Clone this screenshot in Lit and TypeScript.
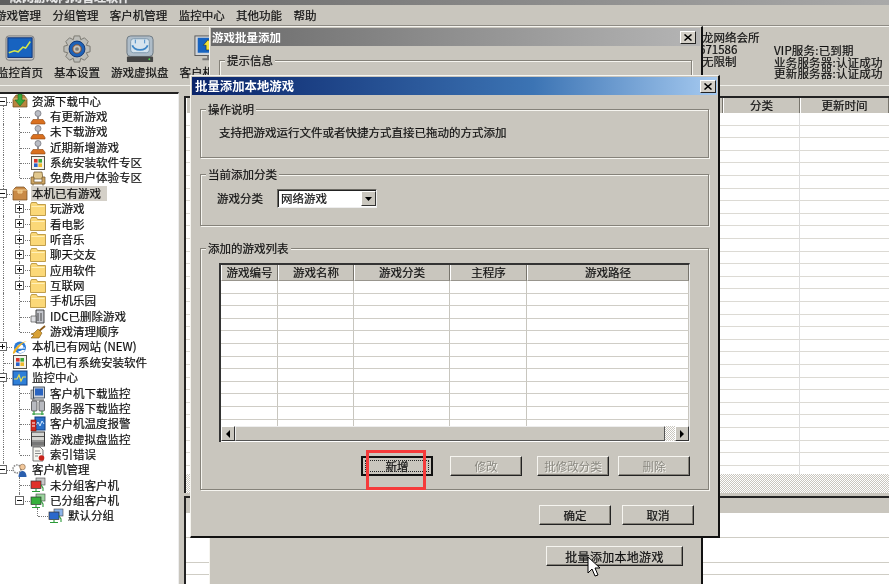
import { LitElement, html, css, svg } from "lit";
import { customElement } from "lit/decorators.js";

const icons: Record<string, unknown> = {
  download: svg`<path d="M1 6l3-4h8l3 4v8H1z" fill="#b9853f" stroke="#6b4a1c" stroke-width=".7"/><path d="M1 6h14" stroke="#e8c98a"/><path d="M6 1h4v6h3l-5 6-5-6h3z" fill="#35a83a" stroke="#1c6a20" stroke-width=".6"/>`,
  stamp: svg`<circle cx="8" cy="4.5" r="3" fill="#b9bcc4" stroke="#6a6a72" stroke-width=".7"/><path d="M7 7h2v3H7z" fill="#8e8e96"/><path d="M3 10.5h10l2 3v1.5H1V13.5z" fill="#d9701f" stroke="#8a3f0c" stroke-width=".6"/>`,
  win: svg`<rect x="1.5" y="1.5" width="13" height="13" fill="#f4f2ea" stroke="#55524a"/><rect x="4" y="4" width="3.6" height="3.6" fill="#d8332a"/><rect x="8.4" y="4" width="3.6" height="3.6" fill="#3ba53b"/><rect x="4" y="8.4" width="3.6" height="3.6" fill="#2a62c8"/><rect x="8.4" y="8.4" width="3.6" height="3.6" fill="#eeb92a"/>`,
  chair: svg`<path d="M4 2h8l1 7H3z" fill="#e2c88e" stroke="#6c5226" stroke-width=".7"/><path d="M1 7h3v5h8V7h3v7H1z" fill="#cfa765" stroke="#6c5226" stroke-width=".7"/><path d="M3 14v1.5M13 14v1.5" stroke="#6c5226"/>`,
  box: svg`<path d="M1 5l3-3h8l3 3v10H1z" fill="#c98a46" stroke="#70481c" stroke-width=".7"/><path d="M1 5h14M6 5v3h4V5" stroke="#f0cd90" fill="#e9b66e"/>`,
  folder: svg`<path d="M0.5 3.5l1-2h5l1 2h8v11h-15z" fill="#fbd878" stroke="#b08a30" stroke-width=".8"/><path d="M1.5 5.5h13" stroke="#fff0b8"/>`,
  trash: svg`<path d="M6 2h8v13H6z" fill="#c4c6cc" stroke="#333" stroke-width=".9"/><path d="M8 5v8M11 5v8" stroke="#444"/><path d="M1 8h5v6H1z" fill="#dfe0e4" stroke="#555" stroke-width=".7"/>`,
  broom: svg`<path d="M15 2L8 8" stroke="#8a5a1c" stroke-width="1.8"/><path d="M8 5l4 4-3 5-8 0 3-3-3-1 3-1z" fill="#d9a236" stroke="#7a5512" stroke-width=".6"/>`,
  ie: svg`<ellipse cx="8" cy="8.5" rx="6" ry="6" fill="#2a7ad6"/><ellipse cx="8.3" cy="7.5" rx="3" ry="2" fill="#fff"/><path d="M4 8.5h9v1H4zM7 12a3 3 0 0 0 3-1h3c-1 3-5 4-7 2z" fill="#fff"/><path d="M1 15c-1-3 6-12 14-13-4 1-10 8-12 12z" fill="#f0b429"/>`,
  pulse: svg`<rect x="1" y="1" width="14" height="14" fill="#2f7fd8" stroke="#123f80"/><path d="M2 9h3l2-4 2 6 2-4h3" stroke="#f1e24a" fill="none" stroke-width="1.1"/>`,
  client: svg`<rect x="1" y="5" width="3" height="9" fill="#c5c7cc" stroke="#444" stroke-width=".6"/><rect x="3.5" y="2" width="11" height="11" fill="#cfd3da" stroke="#234" stroke-width=".8"/><rect x="5" y="3.5" width="8" height="7" fill="#2a64c0"/><path d="M2 15h12" stroke="#555"/>`,
  server: svg`<rect x="1.5" y="1" width="5.5" height="10" rx="1" fill="#b8bac0" stroke="#333" stroke-width=".7"/><rect x="9" y="1" width="5.5" height="10" rx="1" fill="#b8bac0" stroke="#333" stroke-width=".7"/><path d="M4 11v4M12 11v4M2 14h12" stroke="#2b9a38" stroke-width="1.2"/>`,
  temp: svg`<rect x="5" y="1" width="10" height="13" fill="#2a70c8" stroke="#123f80"/><path d="M6 9l2-3 2 4 2-5 2 3" stroke="#cfe8ff" fill="none"/><rect x="1" y="4" width="5" height="11" fill="#d02a22" stroke="#7a100c" stroke-width=".6"/><path d="M2 7h3M2 10h3" stroke="#fff"/>`,
  vdisk: svg`<rect x="1.5" y="1" width="13" height="14" fill="#d5d5d2" stroke="#3a3a3a"/><path d="M2 5.5h12M2 10h12" stroke="#555"/><rect x="2" y="11" width="12" height="3" fill="#777"/>`,
  doc: svg`<path d="M3 1h7l3 3v11H3z" fill="#f7f6f0" stroke="#555" stroke-width=".8"/><path d="M5 5h5M5 7.5h6M5 10h3" stroke="#888"/><circle cx="11.5" cy="12" r="2.8" fill="#c8241c"/>`,
  users: svg`<circle cx="5" cy="7" r="4" fill="none" stroke="#888" stroke-width="1.6" stroke-dasharray="1.5 1"/><circle cx="10.5" cy="5" r="2.8" fill="#f2c79a" stroke="#6a4a2a" stroke-width=".5"/><path d="M6.5 15c0-4 2-6 4-6s4 2 4 6z" fill="#2a5fae"/>`,
};
const net = (c: string, d: string) => svg`<rect x="6" y="1" width="9" height="7" fill="${d}" stroke="#444" stroke-width=".6"/><rect x="1" y="4" width="10" height="7.5" fill="${c}" stroke="#333" stroke-width=".7"/><path d="M6 11.5V14M2 14.5h8M11 8l2 3v3" stroke="#2b9a38" stroke-width="1.1" fill="none"/>`;
icons.netred = net("#e0322a", "#c8c8c8");
icons.netgreen = net("#36b03c", "#9bd69e");
icons.netblue = net("#2a68cc", "#8cb4ea");

const ic = (n: string) => html`<svg class="ti" viewBox="0 0 16 16">${icons[n]}</svg>`;

type Row = [number, string, string, string];
const rows: Row[] = [
  [0, "-", "download", "资源下载中心"],
  [1, "", "stamp", "有更新游戏"],
  [1, "", "stamp", "未下载游戏"],
  [1, "", "stamp", "近期新增游戏"],
  [1, "", "win", "系统安装软件专区"],
  [1, "", "chair", "免费用户体验专区"],
  [0, "-", "box", "本机已有游戏"],
  [1, "+", "folder", "玩游戏"],
  [1, "+", "folder", "看电影"],
  [1, "+", "folder", "听音乐"],
  [1, "+", "folder", "聊天交友"],
  [1, "+", "folder", "应用软件"],
  [1, "+", "folder", "互联网"],
  [1, "", "folder", "手机乐园"],
  [1, "", "trash", "IDC已删除游戏"],
  [1, "", "broom", "游戏清理顺序"],
  [0, "+", "ie", "本机已有网站 (NEW)"],
  [0, "", "win", "本机已有系统安装软件"],
  [0, "-", "pulse", "监控中心"],
  [1, "", "client", "客户机下载监控"],
  [1, "", "server", "服务器下载监控"],
  [1, "", "temp", "客户机温度报警"],
  [1, "", "vdisk", "游戏虚拟盘监控"],
  [1, "", "doc", "索引错误"],
  [0, "-", "users", "客户机管理"],
  [1, "", "netred", "未分组客户机"],
  [1, "-", "netgreen", "已分组客户机"],
  [2, "", "netblue", "默认分组"],
];
const lastKids = new Set([5, 15, 23, 26]);
const inKids = (i: number) => (i >= 1 && i <= 5) || (i >= 7 && i <= 15) || (i >= 19 && i <= 23) || i === 25 || i === 26;

@customElement("app-root")
export class AppRoot extends LitElement {
  static styles = css`
    :host { display: block; width: 889px; height: 584px; position: relative; overflow: hidden; background: #c9c6be;
      font: 11.5px "Noto Sans CJK SC", "Liberation Sans", sans-serif; color: #111; filter: blur(0.35px); -webkit-text-stroke: 0.2px; }
    .title { height: 5px; background: linear-gradient(90deg, #5e5e5e, #8a8a8a 60%, #a9a9a9); overflow: hidden; position: relative; color: #e8e8e8; font-weight: bold; }
    .title span { display: block; margin: -11px 0 0 10px; line-height: 16px; font-size: 12px; }
    .menu { height: 20px; display: flex; align-items: center; gap: 11.4px; margin-left: -5px; }
    .toolbar { height: 59px; display: flex; border-top: 1px solid #8e8b84; box-shadow: inset 0 1px 0 #f4f3ee; border-bottom: 1px solid #f0efe9; }
    .tools { display: flex; gap: 11px; margin-left: -3px; padding-top: 9px; }
    .tool { display: flex; flex-direction: column; align-items: center; gap: 3px; line-height: 12px; }
    .tool svg { width: 32px; height: 28px; }
    .info { margin-left: auto; width: 187px; display: flex; line-height: 11.5px; padding-top: 5px; }
    .il { width: 72px; line-height: 12px; white-space: nowrap; overflow: hidden; }
    .ir { padding-top: 14px; white-space: nowrap; letter-spacing: .2px; }
    .body { display: flex; height: 499px; margin-top: 5.5px; }
    .tree { width: 178px; background: #fff; border-top: 2px solid #222; border-right: 1px solid #eee; overflow: hidden; flex: none; }
    .row { height: 15.37px; position: relative; display: flex; align-items: center; white-space: nowrap; }
    .l0 { padding-left: 12px; } .l1 { padding-left: 30px; } .l2 { padding-left: 48px; }
    .ti { width: 16px; height: 16px; flex: none; margin-right: 3px; }
    .lb { padding: 0 1px; line-height: 15px; }
    .sel { background: #d4d0c8; padding-right: 6px; }
    .v, .h { position: absolute; }
    .v { border-left: 1px dotted #777; top: 0; bottom: 0; }
    .h { border-top: 1px dotted #777; top: 8px; height: 0; }
    .half { bottom: 50%; } .lower { top: 50%; }
    .v3 { left: 3px; } .v19 { left: 19px; } .v37 { left: 37px; }
    .h0 { left: 4px; width: 8px; } .h1 { left: 20px; width: 10px; } .h2 { left: 38px; width: 10px; }
    .exp { position: absolute; top: 3px; width: 7px; height: 7px; background: #fff; border: 1px solid #666; }
    .exp::before { content: ""; position: absolute; left: 1px; right: 1px; top: 3px; height: 1px; background: #111; }
    .exp.plus::after { content: ""; position: absolute; top: 1px; bottom: 1px; left: 3px; width: 1px; background: #111; }
    .e0 { left: -2px; } .e1 { left: 15px; }
    .gut { width: 5px; flex: none; }
    .right { flex: 1; display: flex; flex-direction: column; }
    .list { border-left: 2px solid #222; border-top: 2px solid #222; margin-top: 4px; display: flex; flex-direction: column; height: 395px; }
    .lh { display: flex; height: 15px; background: #c9c6be; flex: none; }
    .lh div { text-align: center; line-height: 15px; border-left: 1px solid #fff; border-right: 1px solid #77746c; }
    .c0 { width: 535px; } .c1 { width: 75px; } .c2 { flex: 1; }
    .lb1 { flex: 1; background: repeating-linear-gradient(180deg, #fff 0 11.6px, #dcdad4 11.6px 12.6px); position: relative; }
    .lb1::after { content: ""; position: absolute; top: 0; bottom: 0; left: 613px; width: 1px; background: #ddd; }
    .hatch { height: 19px; flex: none; background: repeating-conic-gradient(#c9c6be 0 25%, #fff 0 50%) 0 0 / 2px 2px; }
    .list2 { border-left: 2px solid #222; border-top: 2px solid #222; margin-top: 3px; flex: 1; display: flex; flex-direction: column; }
    .gh { height: 15px; background: #c9c6be; flex: none; }
    .lb2 { flex: 1; background: repeating-linear-gradient(180deg, #fff 0 11.5px, #cfcdc5 11.5px 12.5px); }

    .dlg { position: absolute; background: #c9c6be; border-top: 1px solid #f6f5f0; border-left: 1px solid #f6f5f0; border-right: 2px solid #111; border-bottom: 2px solid #111; display: flex; flex-direction: column; }
    .d1 { left: 209px; top: 26px; width: 494px; height: 590px; padding-bottom: 48px; box-sizing: border-box; }
    .d2 { left: 190px; top: 75px; width: 527px; height: 460px; }
    .cap { height: 18px; margin: 1px 1px 0; display: flex; align-items: center; justify-content: space-between; padding: 0 3px; color: #fff; font-weight: bold; flex: none; white-space: nowrap; -webkit-text-stroke: 0; }
    .d1 .cap { background: linear-gradient(90deg, #6a6a6a, #b5b5b5); font-size: 11.5px; padding: 0 4px 0 1px; }
    .d2 .cap { background: linear-gradient(90deg, #0a246a, #3c74b4 65%, #a6caf0); font-size: 12.4px; padding-right: 1px; margin-top: 1px; }
    .x { width: 14px; height: 11px; background: #d4d0c8; border: 1px solid; border-color: #fff #222 #222 #fff; display: flex; align-items: center; justify-content: center; }
    .x svg { width: 8px; height: 7px; }
    .group { position: relative; border: 1px solid #85827a; box-shadow: 1px 1px 0 #f6f5f0, inset 1px 1px 0 #f6f5f0; box-sizing: border-box; }
    .legend { position: absolute; top: -9px; left: 5px; background: #c9c6be; padding: 0 2px; line-height: 16px; white-space: nowrap; }
    .g0 { margin: 14px 9px 0 9px; height: 70px; }
    .dbody { padding: 0 9px; display: flex; flex-direction: column; }
    .g1 { margin-top: 14px; height: 49px; padding: 14px 0 0 18px; }
    .g2 { margin-top: 16px; height: 52px; padding: 14px 0 0 16px; display: flex; gap: 14px; }
    .g3 { margin-top: 22px; height: 242px; padding: 14px 18px 0 18px; }
    .lab { line-height: 18px; }
    .sl { width: 95px; height: 17px; background: #fff; border: 1px solid; border-color: #6c6a64 #eee #eee #6c6a64; display: flex; justify-content: space-between; box-shadow: inset 1px 1px 0 #222; padding-left: 3px; line-height: 17px; box-sizing: content-box; }
    .sb { width: 15px; background: #c9c6be; border: 1px solid; border-color: #fff #333 #333 #fff; margin: 1px 0; display: flex; align-items: center; justify-content: center; box-sizing: border-box; }
    .tbl { height: 177px; border-top: 2px solid #333; border-left: 2px solid #333; border-right: 1px solid #eee; display: flex; flex-direction: column; background: #fff; }
    .tr { display: grid; grid-template-columns: 57px 76px 96px 77px 1fr; flex: none; }
    .th { background: #c9c6be; height: 15px; line-height: 14px; text-align: center; border-left: 1px solid #fff; border-right: 1px solid #77746c; border-bottom: 1px solid #98958d; }
    .rows { height: 145px; overflow: hidden; flex: none; }
    .td { height: 12.6px; box-sizing: border-box; border-right: 1px solid #c8c6bf; border-bottom: 1px solid #cfcdc6; }
    .sc { height: 15px; display: flex; background: #c9c6be; flex: none; }
    .sbtn { width: 14px; border: 1px solid; border-color: #fff #333 #333 #fff; display: flex; align-items: center; justify-content: center; box-sizing: border-box; flex: none; }
    .sbtn svg { width: 6px; height: 8px; }
    .thumb { flex: 1; border: 1px solid; border-color: #eee #555 #555 #eee; }
    .track { width: 10px; background: repeating-conic-gradient(#c9c6be 0 25%, #fff 0 50%) 0 0 / 2px 2px; flex: none; }
    .btns { display: flex; justify-content: flex-end; margin-top: 14px; }
    .btn { width: 72px; height: 20px; box-sizing: border-box; background: #c9c6be; border: 1px solid; border-color: #f6f5f0 #222 #222 #f6f5f0; box-shadow: inset -1px -1px 0 #85827a; display: flex; align-items: center; justify-content: center; white-space: nowrap; position: relative; }
    .dis { color: #8a8880; text-shadow: 1px 1px 0 #f4f3ee; -webkit-text-stroke: 0; }
    .def { border: 2px solid #111; box-shadow: none; }
    .def::after { content: ""; position: absolute; inset: 2px; border: 1px dotted #222; }
    .m1 { margin-left: 17px; } .m2 { margin-left: 15px; } .m3 { margin-left: 9px; }
    .foot { display: flex; justify-content: flex-end; gap: 11px; margin: 15px 15px 0 0; }
    .big { width: 137px; align-self: flex-end; margin: auto 18px 0 0; font-size: 12px; letter-spacing: .3px; }
    .red { position: absolute; left: 175px; top: 374px; width: 60px; height: 40px; border: 3px solid #f53a3a; box-sizing: border-box; }
    .cur { position: absolute; left: 587px; top: 556px; width: 14px; height: 22px; }
    .t { margin-left: -3px; }
  `;

  render() {
    const tri = (d: string) => html`<svg viewBox="0 0 6 8"><path d="${d}" fill="#000"/></svg>`;
    const closeBtn = html`<div class="x"><svg viewBox="0 0 8 7"><path d="M0.5 0.5L7.5 6.5M7.5 0.5L0.5 6.5" stroke="#000" stroke-width="1.5"/></svg></div>`;
    return html`
      <div class="title"><span>顺网游戏内网管理软件</span></div>
      <div class="menu">
        ${["游戏管理", "分组管理", "客户机管理", "监控中心", "其他功能", "帮助"].map((m) => html`<span>${m}</span>`)}
      </div>
      <div class="toolbar">
        <div class="tools">
          <div class="tool"><svg viewBox="0 0 32 30"><rect x="1" y="1" width="30" height="26" rx="3" fill="#c6c6c6" stroke="#777"/><rect x="3" y="3" width="26" height="21" fill="#1763c0" stroke="#0c2f70"/><path d="M4 19l6-2 4 1 5-5 3 1 5-7" stroke="#d6e84a" stroke-width="1.6" fill="none"/></svg><span>监控首页</span></div>
          <div class="tool"><svg viewBox="0 0 32 30"><path d="M13 1h6l1 4 4-2 4 4-2 4 4 1v6l-4 1 2 4-4 4-4-2-1 4h-6l-1-4-4 2-4-4 2-4-4-1v-6l4-1-2-4 4-4 4 2z" fill="#bdbdb8" stroke="#77756e"/><circle cx="16" cy="15" r="8.5" fill="#1e62b8" stroke="#0e3370"/><circle cx="16" cy="15" r="4.5" fill="#c6c2ba" stroke="#8a4a20"/><circle cx="16" cy="15" r="2" fill="#7a7a78"/></svg><span>基本设置</span></div>
          <div class="tool"><svg viewBox="0 0 32 30"><rect x="2" y="1" width="28" height="22" rx="4" fill="#aebcc8" stroke="#6a7680"/><rect x="6" y="4" width="20" height="15" rx="3" fill="#d6e4ee" stroke="#7d98ac"/><path d="M8 11a8 5 0 0 0 16 0" fill="none" stroke="#3d86c6" stroke-width="2"/><path d="M11 5v4M21 5v4" stroke="#3d86c6"/><rect x="2" y="23" width="28" height="6" rx="1" fill="#444"/><circle cx="26" cy="26" r="1" fill="#4fd14f"/></svg><span>游戏虚拟盘</span></div>
          <div class="tool"><svg viewBox="0 0 32 30"><rect x="2" y="1" width="28" height="21" fill="#cfd3d8" stroke="#555"/><rect x="5" y="3" width="22" height="16" fill="#1763c0"/><path d="M16 5l5 6h-3v5h-4v-5h-3z" fill="#f2e23a" stroke="#111" stroke-width=".5"/><path d="M10 26h12M16 22v4" stroke="#777" stroke-width="2"/></svg><span>客户机监控</span></div>
        </div>
        <div class="info">
          <div class="il">龙网络会所<br /><span class="t">671586</span><br />无限制</div>
          <div class="ir">VIP服务:已到期<br />业务服务器:认证成功<br />更新服务器:认证成功</div>
        </div>
      </div>
      <div class="body">
        <div class="tree">
          ${rows.map(([lv, ex, ico, label], i) => html`
            <div class="row l${lv}">
              ${i < 24 ? html`<span class="v v3 ${i === 0 ? "lower" : ""}"></span>` : i === 24 ? html`<span class="v v3 half"></span>` : ""}
              ${inKids(i) ? html`<span class="v v19 ${lastKids.has(i) ? "half" : ""}"></span>` : ""}
              ${lv === 2 ? html`<span class="v v37 half"></span><span class="h h2"></span>` : ""}
              ${lv === 1 ? html`<span class="h h1"></span>` : ""}
              ${lv === 0 ? html`<span class="h h0"></span>` : ""}
              ${ex ? html`<span class="exp e${lv} ${ex === "+" ? "plus" : ""}"></span>` : ""}
              ${ic(ico)}<span class="lb ${i === 6 ? "sel" : ""}">${label}</span>
            </div>`)}
        </div>
        <div class="gut"></div>
        <div class="right">
          <div class="list">
            <div class="lh"><div class="c0"></div><div class="c1">分类</div><div class="c2">更新时间</div></div>
            <div class="lb1"></div>
            <div class="hatch"></div>
          </div>
          <div class="list2"><div class="gh"></div><div class="lb2"></div></div>
        </div>
      </div>

      <div class="dlg d1">
        <div class="cap"><span>游戏批量添加</span>${closeBtn}</div>
        <div class="group g0"><span class="legend">提示信息</span></div>
        <div class="btn big">批量添加本地游戏</div>
      </div>

      <svg class="cur" viewBox="0 0 14 22"><path d="M1 1v16l4-4 3 7 3-1-3-7h5z" fill="#fff" stroke="#000"/></svg>

      <div class="dlg d2">
        <div class="cap"><span>批量添加本地游戏</span>${closeBtn}</div>
        <div class="dbody">
          <div class="group g1"><span class="legend">操作说明</span>支持把游戏运行文件或者快捷方式直接已拖动的方式添加</div>
          <div class="group g2"><span class="legend">当前添加分类</span>
            <span class="lab">游戏分类</span>
            <div class="sl">网络游戏<div class="sb"><svg width="7" height="4" viewBox="0 0 7 4"><path d="M0 0h7L3.5 4z" fill="#000"/></svg></div></div>
          </div>
          <div class="group g3"><span class="legend">添加的游戏列表</span>
            <div class="tbl">
              <div class="tr">${["游戏编号", "游戏名称", "游戏分类", "主程序", "游戏路径"].map((h) => html`<div class="th">${h}</div>`)}</div>
              <div class="rows">
                ${Array.from({ length: 12 }).map(() => html`<div class="tr">${[0, 1, 2, 3, 4].map(() => html`<div class="td"></div>`)}</div>`)}
              </div>
              <div class="sc">
                <div class="sbtn">${tri("M5 0v8L1 4z")}</div>
                <div class="thumb"></div>
                <div class="track"></div>
                <div class="sbtn">${tri("M1 0v8l4-4z")}</div>
              </div>
            </div>
            <div class="btns">
              <div class="btn def">新增</div>
              <div class="btn dis m1">修改</div>
              <div class="btn dis m2">批修改分类</div>
              <div class="btn dis m3">删除</div>
            </div>
          </div>
          <div class="foot"><div class="btn">确定</div><div class="btn">取消</div></div>
        </div>
        <div class="red"></div>
      </div>
    `;
  }
}
